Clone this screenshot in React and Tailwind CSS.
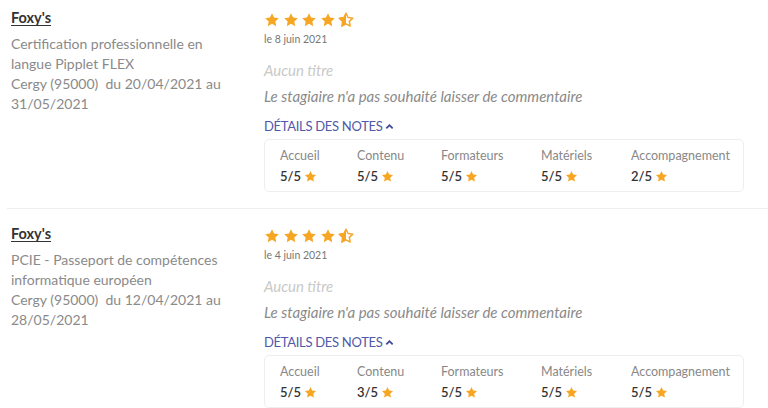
import React from "react";

const STAR = "M12 1.8l3.1 6.5 7.1.9-5.2 4.9 1.3 7.1L12 17.8l-6.3 3.4L7 14.1 1.8 9.2l7.1-.9L12 1.8z";

function Star({ size = 16, half = false }) {
  const id = "half-clip";
  return (
    <svg width={size} height={size} viewBox="0 0 24 24" className="shrink-0">
      {half ? (
        <>
          <defs>
            <clipPath id={id}>
              <rect x="0" y="0" width="12" height="24" />
            </clipPath>
          </defs>
          <path d={STAR} fill="none" stroke="#f6a623" strokeWidth="2.2" strokeLinejoin="round" />
          <path d={STAR} fill="#f6a623" clipPath={`url(#${id})`} />
        </>
      ) : (
        <path d={STAR} fill="#f6a623" />
      )}
    </svg>
  );
}

const reviews = [
  {
    name: "Foxy's",
    formation: "Certification professionnelle en langue Pipplet FLEX",
    place: "Cergy (95000)\u00a0 du 20/04/2021 au 31/05/2021",
    date: "le 8 juin 2021",
    notes: [5, 5, 5, 5, 2],
  },
  {
    name: "Foxy's",
    formation: "PCIE - Passeport de compétences informatique européen",
    place: "Cergy (95000)\u00a0 du 12/04/2021 au 28/05/2021",
    date: "le 4 juin 2021",
    notes: [5, 3, 5, 5, 5],
  },
];

const labels = ["Accueil", "Contenu", "Formateurs", "Matériels", "Accompagnement"];

function Review({ r, first }) {
  return (
    <div className={`flex pb-[16px] ${first ? "pt-[8px]" : "pt-[15px] border-t border-[#eeeeee]"}`}>
      <div className="w-[257px] shrink-0 pl-[4px] pr-[28px]">
        <div className="text-[14.5px] leading-[20px] font-bold text-[#333] underline underline-offset-2">{r.name}</div>
        <div className="mt-[6px] text-[14px] leading-[20px] text-[#8a8a8a]">
          <div>{r.formation}</div>
          <div>{r.place}</div>
        </div>
      </div>
      <div className="flex-1 pr-[24px]">
        <div className="mt-[4px] flex h-[16px] items-center gap-[2.5px]">
          <Star />
          <Star />
          <Star />
          <Star />
          <Star half />
        </div>
        <div className="mt-[4px] text-[10.5px] leading-[14px] text-[#777]">{r.date}</div>
        <div className="mt-[14px] text-[15px] leading-[20px] italic text-[#c9c9c9]">Aucun titre</div>
        <div className="mt-[6px] text-[15px] leading-[20px] italic text-[#8a8a8a]">
          Le stagiaire n'a pas souhaité laisser de commentaire
        </div>
        <div className="mt-[12px] flex items-center gap-[2px] text-[13px] leading-[16px] text-[#5158a8] tracking-[-0.3px]">
          DÉTAILS DES NOTES
          <svg width="9" height="9" viewBox="0 0 10 10">
            <path d="M1.5 7L5 3.5 8.5 7" fill="none" stroke="#3f4595" strokeWidth="2" />
          </svg>
        </div>
        <div className="mt-[5px] w-[480px] rounded-[5px] border border-[#eeeeee] pl-[15px] pt-[8px] pb-[7px] grid grid-cols-[77px_84px_100px_90px_auto]">
          {labels.map((l, i) => (
            <div key={l}>
              <div className="text-[12.5px] leading-[16px] text-[#888]">{l}</div>
              <div className="mt-[4px] flex items-center gap-[3px] text-[13px] leading-[16px] font-semibold text-[#333]">
                {r.notes[i]}/5
                <Star size={13} />
              </div>
            </div>
          ))}
        </div>
      </div>
    </div>
  );
}

export default function App() {
  return (
    <div className="w-[768px] h-[408px] overflow-hidden bg-white pl-[7px]" style={{ fontFamily: "Lato, 'Open Sans', sans-serif" }}>
      {reviews.map((r, i) => (
        <Review key={i} r={r} first={i === 0} />
      ))}
    </div>
  );
}
